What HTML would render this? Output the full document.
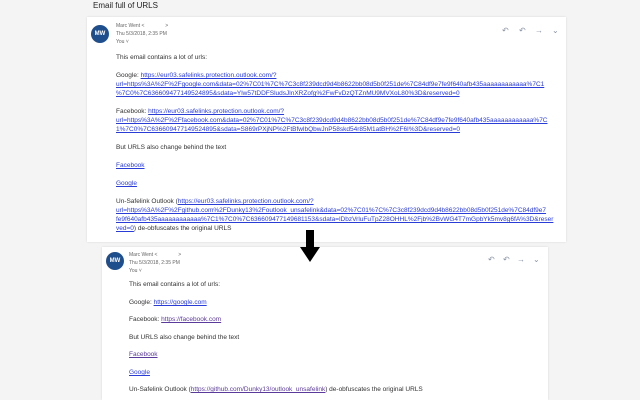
<!DOCTYPE html>
<html><head><meta charset="utf-8"><style>
body{margin:0;width:640px;height:400px;background:#f4f4f4;font-family:"Liberation Sans",sans-serif;position:relative;overflow:hidden;color:#333}
.card{position:absolute;background:#fff;box-shadow:0 0 2px rgba(0,0,0,.12)}
.t{position:absolute;font-size:6.5px;white-space:nowrap;line-height:9px}
.s{font-size:5px;color:#666}
a{color:#2a3cd6;text-decoration:underline}
.av{position:absolute;border-radius:50%;background:#1f4e8c;color:#fff;font-size:6px;font-weight:bold;text-align:center}
.ic{position:absolute;font-size:8px;color:#8a94a6}
</style></head><body>
<div class="t" style="left:93px;top:1px;font-size:8px;color:#222">Email full of URLS</div>
<div class="card" style="left:87px;top:17px;width:479px;height:225px"></div>
<div class="av" style="left:91px;top:25px;width:18px;height:18px;line-height:18px">MW</div>
<div class="t s" style="left:116px;top:22px">Marc Went &lt; &nbsp; &nbsp; &nbsp; &nbsp; &nbsp; &nbsp; &nbsp; &gt;</div>
<div class="t s" style="left:116px;top:30px">Thu 5/3/2018, 2:35 PM</div>
<div class="t s" style="left:116px;top:38px">You ˅</div>
<div class="ic" style="left:502px;top:26px">↶</div><div class="ic" style="left:519px;top:26px">↶</div><div class="ic" style="left:535px;top:26px">→</div><div class="ic" style="left:552px;top:26px">⌄</div>
<div class="t" style="left:116px;top:53px">This email contains a lot of urls:</div>
<div class="t" style="left:116px;top:71px">Google: <a>https://eur03.safelinks.protection.outlook.com/?</a><br><a>url=https%3A%2F%2Fgoogle.com&amp;data=02%7C01%7C%7C3c8f239dcd9d4b8622bb08d5b0f251de%7C84df9e7fe9f640afb435aaaaaaaaaaaa%7C1</a><br><a>%7C0%7C636609477149524895&amp;sdata=Ylw57tDDFSludsJlnXRZofg%2FwFvDzQTZnMU9MVXoL80%3D&amp;reserved=0</a></div>
<div class="t" style="left:116px;top:107px">Facebook: <a>https://eur03.safelinks.protection.outlook.com/?</a><br><a>url=https%3A%2F%2Ffacebook.com&amp;data=02%7C01%7C%7C3c8f239dcd9d4b8622bb08d5b0f251de%7C84df9e7fe9f640afb435aaaaaaaaaaaa%7C</a><br><a>1%7C0%7C636609477149524895&amp;sdata=S869rPXjNP%2FtBfwlbQbwJnP58skd54r85M1atBH%2F6I%3D&amp;reserved=0</a></div>
<div class="t" style="left:116px;top:143px">But URLS also change behind the text</div>
<div class="t" style="left:116px;top:161px"><a>Facebook</a></div>
<div class="t" style="left:116px;top:179px"><a>Google</a></div>
<div class="t" style="left:116px;top:197px">Un-Safelink Outlook (<a>https://eur03.safelinks.protection.outlook.com/?</a><br><a>url=https%3A%2F%2Fgithub.com%2FDunky13%2Foutlook_unsafelink&amp;data=02%7C01%7C%7C3c8f239dcd9d4b8622bb08d5b0f251de%7C84df9e7</a><br><a>fe9f640afb435aaaaaaaaaaaa%7C1%7C0%7C636609477149681153&amp;sdata=lDbzVrluFuTpZ28OHHL%2Fjb%2BvWG4T7mGpbYk5mv8g6fA%3D&amp;reser</a><br><a>ved=0</a>) de-obfuscates the original URLS</div>
<div class="card" style="left:102px;top:247px;width:446px;height:153px"></div>
<svg style="position:absolute;left:300px;top:230px" width="20" height="32"><path d="M6 0h8v17h6L10 32 0 17h6z" fill="#000"/></svg>
<div class="av" style="left:106px;top:252px;width:18px;height:18px;line-height:18px">MW</div>
<div class="t s" style="left:129px;top:251px">Marc Went &lt; &nbsp; &nbsp; &nbsp; &nbsp; &nbsp; &nbsp; &nbsp; &gt;</div>
<div class="t s" style="left:129px;top:259px">Thu 5/3/2018, 2:35 PM</div>
<div class="t s" style="left:129px;top:267px">You ˅</div>
<div class="ic" style="left:488px;top:255px">↶</div><div class="ic" style="left:503px;top:255px">↶</div><div class="ic" style="left:517px;top:255px">→</div><div class="ic" style="left:533px;top:255px">⌄</div>
<div class="t" style="left:129px;top:280px">This email contains a lot of urls:</div>
<div class="t" style="left:129px;top:298px">Google: <a>https://google.com</a></div>
<div class="t" style="left:129px;top:315px">Facebook: <a style="color:#5a3a9a">https://facebook.com</a></div>
<div class="t" style="left:129px;top:333px">But URLS also change behind the text</div>
<div class="t" style="left:129px;top:350px"><a style="color:#5a3a9a">Facebook</a></div>
<div class="t" style="left:129px;top:368px"><a>Google</a></div>
<div class="t" style="left:129px;top:385px">Un-Safelink Outlook (<a style="color:#5a3a9a">https://github.com/Dunky13/outlook_unsafelink</a>) de-obfuscates the original URLS</div>
</body></html>
